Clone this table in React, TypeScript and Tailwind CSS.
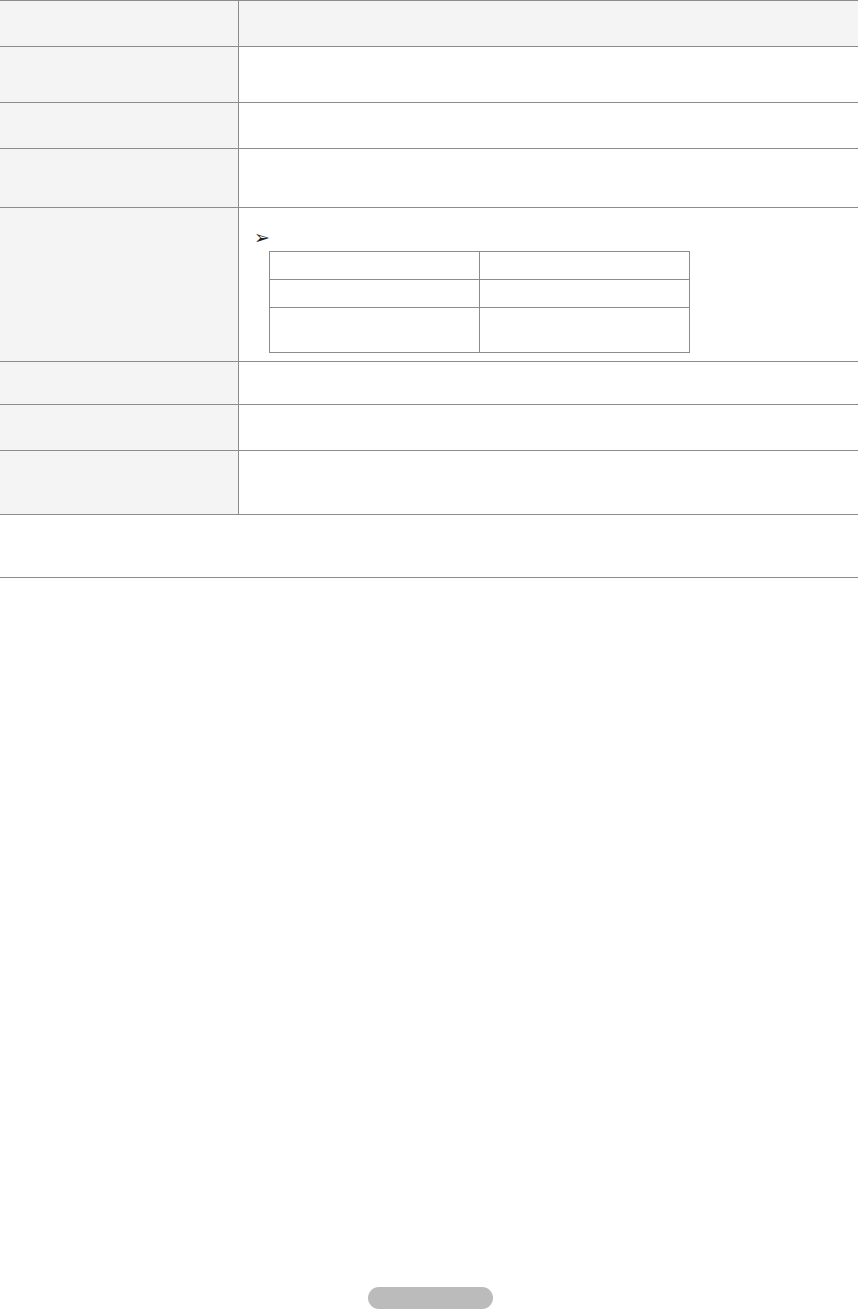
import type { FC } from "react";

type Row = { h: string; head?: boolean; note?: boolean };

// row heights without the 1px bottom border
const rows: Row[] = [
    { h: "h-[45px]", head: true },
    { h: "h-[55px]" },
    { h: "h-[45px]" },
    { h: "h-[58px]" },
    { h: "h-[153px]", note: true },
    { h: "h-[42px]" },
    { h: "h-[45px]" },
    { h: "h-[63px]" },
];

const SubTable: FC = () => {
    const subRows = ["h-[28px]", "h-[28px]", "h-[44px]"];
    return (
        <div className="ml-[15px] w-[421px] border border-[#8c8c8c]">
            {subRows.map((h, i) => (
                <div key={i} className={`flex ${h} ${i < subRows.length - 1 ? "border-b border-[#8c8c8c]" : ""}`}>
                    <div className="w-[210px] border-r border-[#8c8c8c]" />
                    <div className="flex-1" />
                </div>
            ))}
        </div>
    );
};

const App: FC = () => {
    return (
        <div className="w-[858px] h-[1310px] bg-white flex flex-col font-['Liberation_Sans',sans-serif] text-[12px] text-black">
            <div className="border-t border-[#8c8c8c]">
                {rows.map((row, i) => (
                    <div key={i} className={`flex ${row.h} box-content border-b border-[#8c8c8c]`}>
                        <div className="w-[238px] shrink-0 bg-[#f4f4f4] border-r border-[#8c8c8c] box-content" />
                        <div className={`flex-1 ${row.head ? "bg-[#f4f4f4]" : "bg-white"}`}>
                            {row.note && (
                                <div className="pl-[15px] pt-[19px]">
                                    <div className="h-[24px] leading-[21px] font-['DejaVu_Sans',sans-serif] text-[19px] text-[#222]">➢</div>
                                    <SubTable />
                                </div>
                            )}
                        </div>
                    </div>
                ))}
                <div className="h-[62px] box-content border-b border-[#8c8c8c]" />
            </div>
            <div className="mt-auto mb-px ml-[368px] w-[125px] h-[22px] rounded-full bg-[#bbbbbb]" />
        </div>
    );
};

export default App;
